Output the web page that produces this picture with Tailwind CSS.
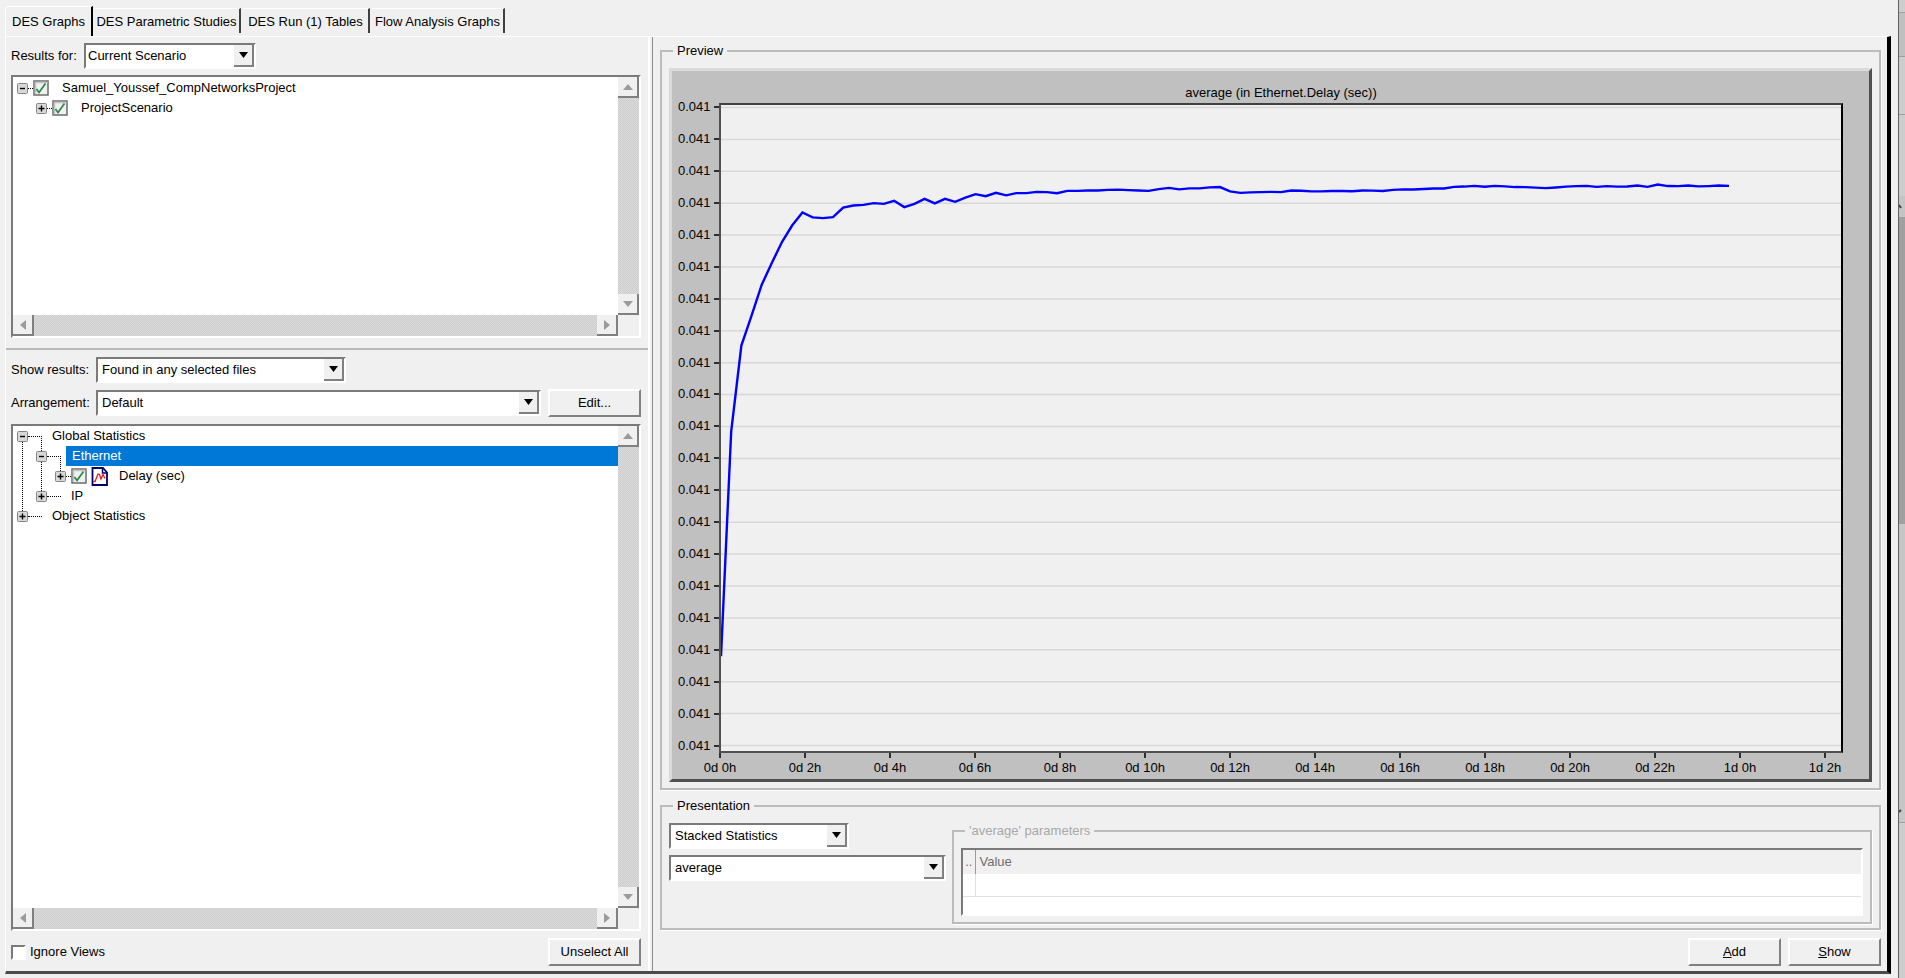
<!DOCTYPE html>
<html lang="en">
<head>
<meta charset="utf-8">
<title>Results Browser</title>
<script src="https://cdn.jsdelivr.net/npm/@tailwindcss/browser@4"></script>
</head>
<body class="flex h-screen overflow-hidden bg-[#f0f0f0] font-['Liberation_Sans',Arial,sans-serif] text-[13px] leading-5 text-black">
<svg class="absolute size-0">
  <defs>
    <symbol id="minus" viewBox="0 0 11 11"><rect x=".5" y=".5" width="10" height="10" rx="1" fill="#d8d8d8" stroke="#868686"/><path d="M3 5.5h5" stroke="#000" stroke-width="1.4"/></symbol>
    <symbol id="plus" viewBox="0 0 11 11"><rect x=".5" y=".5" width="10" height="10" rx="1" fill="#d8d8d8" stroke="#868686"/><path d="M2.5 5.5h6M5.5 2.5v6" stroke="#000" stroke-width="1.4"/></symbol>
    <symbol id="check" viewBox="0 0 16 16"><rect x="1" y="1" width="14" height="14" fill="#f0f0f0" stroke="#6c6c6c" stroke-width="1.5"/><path d="M2.500 14V2.500h12" fill="none" stroke="#c4c4c4" stroke-width="1.500"/><path d="M3.500 9l2.500 3.500L12.500 3.500" fill="none" stroke="#2d8a4a" stroke-width="1.800"/></symbol>
    <symbol id="doc" viewBox="0 0 18 19"><path d="M1.500 1h10.500l4 4.500V18H1.500z" fill="#fff" stroke="#00006e" stroke-width="1.800"/><path d="M11.500 1v5h5" fill="none" stroke="#00006e" stroke-width="1.500"/><path d="M2.500 14.500h1.500L7 7l1.500.5L10 12l2-4.500 2 4" fill="none" stroke="#f01818" stroke-width="1.300"/></symbol>
    <pattern id="dither" width="2" height="2" patternUnits="userSpaceOnUse"><rect width="2" height="2" fill="#dadada"/><path d="M0 0h1v1H0zM1 1h1v1H1z" fill="#cecece"/></pattern>
    <symbol id="up" viewBox="0 0 10 6"><path d="M0 6h10L5 0z" fill="#9b9b9b"/></symbol>
    <symbol id="down" viewBox="0 0 10 6"><path d="M0 0h10L5 6z" fill="#9b9b9b"/></symbol>
    <symbol id="left" viewBox="0 0 6 10"><path d="M6 0v10L0 5z" fill="#9b9b9b"/></symbol>
    <symbol id="right" viewBox="0 0 6 10"><path d="M0 0v10l6-5z" fill="#9b9b9b"/></symbol>
    <symbol id="drop" viewBox="0 0 9 6"><path d="M0 0h9L4.500 6z" fill="#000"/></symbol>
  </defs>
</svg>

<div class="flex min-w-0 flex-1 flex-col pt-1.5 pr-[7px] pb-1 pl-[5px]">
  <nav class="flex h-[30px] shrink-0 items-start" role="tablist">
    <button role="tab" aria-selected="true" class="h-[31px] w-[88px] rounded-tl-sm border-t border-r-2 border-l border-t-white border-r-black border-l-white text-center whitespace-nowrap">DES Graphs</button>
    <button role="tab" class="mt-0.5 ml-px h-[25px] w-[147px] border-t border-r-2 border-t-white border-r-[#404040] pt-px text-center whitespace-nowrap">DES Parametric Studies</button>
    <button role="tab" class="mt-0.5 ml-0.5 h-[25px] w-[127px] border-t border-r-2 border-t-white border-r-[#404040] pt-px text-center whitespace-nowrap">DES Run (1) Tables</button>
    <button role="tab" class="mt-0.5 ml-0.5 h-[25px] w-[133px] border-t border-r-2 border-t-white border-r-[#404040] pt-px text-center whitespace-nowrap">Flow Analysis Graphs</button>
  </nav>

  <div class="flex min-h-0 flex-1 border-t border-r-4 border-b-3 border-l border-t-white border-r-black border-b-[#4a4a4a] border-l-white">
    <!-- Left pane: file tree and statistic tree -->
    <section class="flex w-[644px] shrink-0 flex-col border-r-2 border-white">
      <div class="flex h-[313px] shrink-0 flex-col border-b-2 border-[#b9b9b9] pt-1.5 pr-[7px] pb-2.5 pl-[5px]">
        <div class="flex items-center">
          <label for="results" class="w-[73px]">Results for:</label>
          <div class="relative h-[26px] w-[172px] border-2 border-t-[#7a7a7a] border-r-white border-b-white border-l-[#7a7a7a] bg-white">
            <select id="results" class="h-full w-full appearance-none pl-0.5 outline-none"><option>Current Scenario</option></select>
            <span class="pointer-events-none absolute inset-y-0 right-0 flex w-5 items-center justify-center border-r-2 border-b-2 border-[#808080] bg-[#f0f0f0]"><svg class="h-1.5 w-[9px]"><use href="#drop"/></svg></span>
          </div>
        </div>
        <div class="mt-1.5 flex min-h-0 flex-1 flex-col border-2 border-t-[#7a7a7a] border-r-white border-b-white border-l-[#7a7a7a] bg-white">
          <div class="flex min-h-0 flex-1">
            <ul class="min-w-0 flex-1 pt-px pl-1" role="tree">
              <li class="flex h-5 items-center"><svg class="size-[11px]"><use href="#minus"/></svg><i class="w-[5px] border-t border-dotted border-black"></i><svg class="size-4"><use href="#check"/></svg><span class="ml-[13px]">Samuel_Youssef_CompNetworksProject</span></li>
              <li class="flex h-5 items-center pl-[19px]"><svg class="size-[11px]"><use href="#plus"/></svg><i class="w-[5px] border-t border-dotted border-black"></i><svg class="size-4"><use href="#check"/></svg><span class="ml-[13px]">ProjectScenario</span></li>
            </ul>
            <div class="flex w-[21px] flex-col">
              <button aria-label="Scroll up" class="flex h-[21px] items-center justify-center border-r-2 border-b-2 border-[#808080] bg-[#f0f0f0]"><svg class="h-1.5 w-2.5"><use href="#up"/></svg></button>
              <svg class="min-h-0 w-full flex-1"><rect width="100%" height="100%" fill="url(#dither)"/></svg>
              <button aria-label="Scroll down" class="flex h-[21px] items-center justify-center border-r-2 border-b-2 border-[#808080] bg-[#f0f0f0]"><svg class="h-1.5 w-2.5"><use href="#down"/></svg></button>
            </div>
          </div>
          <div class="flex h-[21px] bg-[#f0f0f0] pr-[21px]">
            <button aria-label="Scroll left" class="flex w-[21px] items-center justify-center border-r-2 border-b-2 border-[#808080] bg-[#f0f0f0]"><svg class="h-2.5 w-1.5"><use href="#left"/></svg></button>
            <svg class="h-full min-w-0 flex-1"><rect width="100%" height="100%" fill="url(#dither)"/></svg>
            <button aria-label="Scroll right" class="flex w-[21px] items-center justify-center border-r-2 border-b-2 border-[#808080] bg-[#f0f0f0]"><svg class="h-2.5 w-1.5"><use href="#right"/></svg></button>
          </div>
        </div>
      </div>

      <div class="flex min-h-0 flex-1 flex-col pt-[7px] pr-[7px] pb-[5px] pl-[5px]">
        <div class="flex items-center">
          <label for="show" class="w-[85px]">Show results:</label>
          <div class="relative h-[26px] w-[250px] border-2 border-t-[#7a7a7a] border-r-white border-b-white border-l-[#7a7a7a] bg-white">
            <select id="show" class="h-full w-full appearance-none pl-1 outline-none"><option>Found in any selected files</option></select>
            <span class="pointer-events-none absolute inset-y-0 right-0 flex w-5 items-center justify-center border-r-2 border-b-2 border-[#808080] bg-[#f0f0f0]"><svg class="h-1.5 w-[9px]"><use href="#drop"/></svg></span>
          </div>
        </div>
        <div class="mt-1.5 flex items-center">
          <label for="arr" class="w-[85px]">Arrangement:</label>
          <div class="relative h-[26px] w-[445px] border-2 border-t-[#7a7a7a] border-r-white border-b-white border-l-[#7a7a7a] bg-white">
            <select id="arr" class="h-full w-full appearance-none pl-1 outline-none"><option>Default</option></select>
            <span class="pointer-events-none absolute inset-y-0 right-0 flex w-5 items-center justify-center border-r-2 border-b-2 border-[#808080] bg-[#f0f0f0]"><svg class="h-1.5 w-[9px]"><use href="#drop"/></svg></span>
          </div>
          <button class="ml-auto h-7 w-[93px] border-2 border-t-white border-r-[#808080] border-b-[#808080] border-l-white">Edit...</button>
        </div>
        <div class="mt-[7px] flex min-h-0 flex-1 flex-col border-2 border-t-[#7a7a7a] border-r-white border-b-white border-l-[#7a7a7a] bg-white">
          <div class="flex min-h-0 flex-1">
            <ul class="relative min-w-0 flex-1 pl-1" role="tree">
              <li class="flex h-5 items-center"><svg class="size-[11px]"><use href="#minus"/></svg><i class="w-3.5 border-t border-dotted border-black"></i><span class="ml-2.5">Global Statistics</span></li>
              <li class="flex h-5 items-center pl-[19px]"><svg class="size-[11px]"><use href="#minus"/></svg><i class="w-3.5 border-t border-dotted border-black"></i><span class="ml-[5px] flex-1 bg-[#0078d7] pl-1.5 text-white">Ethernet</span></li>
              <li class="flex h-5 items-center pl-[38px]"><svg class="size-[11px]"><use href="#plus"/></svg><i class="w-[5px] border-t border-dotted border-black"></i><svg class="size-4"><use href="#check"/></svg><svg class="ml-1 h-[19px] w-[18px]"><use href="#doc"/></svg><span class="ml-2.5">Delay (sec)</span></li>
              <li class="flex h-5 items-center pl-[19px]"><svg class="size-[11px]"><use href="#plus"/></svg><i class="w-3.5 border-t border-dotted border-black"></i><span class="ml-2.5">IP</span></li>
              <li class="flex h-5 items-center"><svg class="size-[11px]"><use href="#plus"/></svg><i class="w-3.5 border-t border-dotted border-black"></i><span class="ml-2.5">Object Statistics</span></li>
              <svg class="pointer-events-none absolute top-0 left-0 h-[100px] w-[66px]" fill="none" stroke="#000" stroke-dasharray="1 1"><path d="M9.500 16v69M28.500 10v15M28.500 36v29M47.500 30v15"/></svg>
            </ul>
            <div class="flex w-[21px] flex-col">
              <button aria-label="Scroll up" class="flex h-[21px] items-center justify-center border-r-2 border-b-2 border-[#808080] bg-[#f0f0f0]"><svg class="h-1.5 w-2.5"><use href="#up"/></svg></button>
              <svg class="min-h-0 w-full flex-1"><rect width="100%" height="100%" fill="url(#dither)"/></svg>
              <button aria-label="Scroll down" class="flex h-[21px] items-center justify-center border-r-2 border-b-2 border-[#808080] bg-[#f0f0f0]"><svg class="h-1.5 w-2.5"><use href="#down"/></svg></button>
            </div>
          </div>
          <div class="flex h-[21px] bg-[#f0f0f0] pr-[21px]">
            <button aria-label="Scroll left" class="flex w-[21px] items-center justify-center border-r-2 border-b-2 border-[#808080] bg-[#f0f0f0]"><svg class="h-2.5 w-1.5"><use href="#left"/></svg></button>
            <svg class="h-full min-w-0 flex-1"><rect width="100%" height="100%" fill="url(#dither)"/></svg>
            <button aria-label="Scroll right" class="flex w-[21px] items-center justify-center border-r-2 border-b-2 border-[#808080] bg-[#f0f0f0]"><svg class="h-2.5 w-1.5"><use href="#right"/></svg></button>
          </div>
        </div>
        <div class="mt-[7px] flex items-center">
          <input id="ignore" type="checkbox" class="size-[15px] appearance-none border-2 border-t-[#7a7a7a] border-r-white border-b-white border-l-[#7a7a7a] bg-white">
          <label for="ignore" class="ml-1">Ignore Views</label>
          <button class="ml-auto h-7 w-[93px] border-2 border-t-white border-r-[#808080] border-b-[#808080] border-l-white">Unselect All</button>
        </div>
      </div>
    </section>

    <!-- Right pane: preview graph and presentation options -->
    <section class="ml-0.5 flex min-w-0 flex-1 flex-col border-l border-[#8c8c8c] pt-1 pr-1.5 pb-[5px] pl-[7px]">
      <fieldset class="flex min-h-0 flex-1 flex-col border-2 border-[#bcbcbc] px-[7px] pb-1.5 shadow-[1px_1px_0_#fff]">
        <legend class="ml-1 px-1">Preview</legend>
        <div class="mt-[7px] flex min-h-0 flex-1 flex-col border-3 border-t-[#dadada] border-r-[#505050] border-b-[#505050] border-l-[#dadada] bg-[#c0c0c0] pr-[26px]">
          <h2 class="h-8 pt-3 pl-[47px] text-center leading-5">average (in Ethernet.Delay (sec))</h2>
          <div class="flex min-h-0 flex-1">
            <div id="ylabels" class="flex w-[47px] flex-col justify-between pt-1 pb-[7px]"></div>
            <div class="min-w-0 flex-1 border-2 border-t-[#404040] border-r-black border-b-[#505050] border-l-[#505050] bg-[#f0f0f0]">
              <svg id="plot" class="block h-full w-full" viewBox="720 105 1122 647" preserveAspectRatio="none"></svg>
            </div>
          </div>
          <div id="xlabels" class="mr-[18px] ml-12 flex h-[26px] shrink-0 justify-between"></div>
        </div>
      </fieldset>

      <fieldset class="mt-1.5 flex h-[134px] shrink-0 border-2 border-[#bcbcbc] px-[7px] pb-1 shadow-[1px_1px_0_#fff]">
        <legend class="ml-1 px-1">Presentation</legend>
        <div class="mt-[7px] mr-1.5 flex w-[277px] shrink-0 flex-col gap-1.5">
          <div class="relative h-[26px] w-[180px] border-2 border-t-[#7a7a7a] border-r-white border-b-white border-l-[#7a7a7a] bg-white">
            <select aria-label="Stacking" class="h-full w-full appearance-none pl-1 outline-none"><option>Stacked Statistics</option></select>
            <span class="pointer-events-none absolute inset-y-0 right-0 flex w-5 items-center justify-center border-r-2 border-b-2 border-[#808080] bg-[#f0f0f0]"><svg class="h-1.5 w-[9px]"><use href="#drop"/></svg></span>
          </div>
          <div class="relative h-[26px] w-full border-2 border-t-[#7a7a7a] border-r-white border-b-white border-l-[#7a7a7a] bg-white">
            <select aria-label="Filter" class="h-full w-full appearance-none pl-1 outline-none"><option>average</option></select>
            <span class="pointer-events-none absolute inset-y-0 right-0 flex w-5 items-center justify-center border-r-2 border-b-2 border-[#808080] bg-[#f0f0f0]"><svg class="h-1.5 w-[9px]"><use href="#drop"/></svg></span>
          </div>
        </div>
        <fieldset disabled class="mt-[5px] h-[103px] min-w-0 flex-1 border-2 border-[#bcbcbc] px-[7px] text-[#a8a8a8] shadow-[1px_1px_0_#fff]">
          <legend class="ml-1 px-1">'average' parameters</legend>
          <div class="mt-[7px] h-[68px] border-2 border-t-[#7a7a7a] border-r-white border-b-white border-l-[#7a7a7a] bg-white">
            <table class="w-full table-fixed border-collapse text-left text-[#6d6d6d]">
              <thead class="bg-[#f0f0f0]"><tr class="h-6"><th class="w-3 border-r border-[#9a9a9a] p-0 text-center font-normal">..</th><th class="p-0 pl-1 font-normal">Value</th></tr></thead>
              <tbody><tr class="h-[22px] border-b border-[#e0e0e0]"><td class="border-r border-[#e0e0e0] p-0"></td><td class="p-0"></td></tr></tbody>
            </table>
          </div>
        </fieldset>
      </fieldset>

      <div class="mt-2 flex shrink-0 justify-end gap-[7px]">
        <button class="h-7 w-[93px] border-2 border-t-white border-r-[#808080] border-b-[#808080] border-l-white"><u>A</u>dd</button>
        <button class="h-7 w-[93px] border-2 border-t-white border-r-[#808080] border-b-[#808080] border-l-white"><u>S</u>how</button>
      </div>
    </section>
  </div>
</div>

<!-- Edge of the window behind -->
<aside class="flex w-[7px] shrink-0 flex-col border-l border-[#606060] bg-[#cdcdcd]">
  <div class="h-[13px] border-b border-[#a0a0a0]"></div>
  <div class="h-11 border-b border-[#a0a0a0] bg-[#c0c0c0]"></div>
  <div class="h-[58px] border-b border-[#a0a0a0]"></div>
  <div class="h-[81px]"></div>
  <svg class="h-[21px] w-1.5 bg-[#c4c4c4]"><path d="M0 9l2 3" stroke="#404040" stroke-width="2"/></svg>
  <div class="h-[307px] bg-[#a0a0a0]"></div>
  <div class="h-[276px] bg-[#c6c6c6]"></div>
  <svg class="h-[23px] w-1.5 border-b border-[#a0a0a0] bg-[#c6c6c6]"><path d="M0 12l2-2" stroke="#404040" stroke-width="2"/></svg>
</aside>

<script>
const delays = [657,432,346,316,285,263,242,225.5,212.7,217.5,218.3,217.3,207.7,205.7,205,203.3,204,201,207.3,204,199,203.5,199,202,197.7,194.3,196.3,193,195.5,193.3,193.3,192,192.3,193.3,191,191,190.7,190.7,190,189.8,190.3,190.7,191,189.2,188,189.5,188.5,188.5,187.5,187.2,191.5,193,192.5,192.3,192,192.3,190.7,190.9,191.5,191.5,191.2,191.2,191.4,190.7,190.8,191.2,190,189.5,189.7,189.2,188.7,188.6,187,186.7,186,186.8,186,186.5,187.2,187.3,187.8,188.3,187.6,186.8,186.3,186,187,186.3,186.8,186.6,185.7,187,184.7,186.2,186.3,185.7,186.5,186.2,185.7,186];
let lines = '';
for (let i = 0; i <= 20; i++) {
  const y = 107.5 + i * 31.95;
  lines += `<path d="M720 ${y}H1843" stroke="#d8d8d8" stroke-width="1.5"/>`;
}
const points = delays.map((y, i) => (720 + i * 10.2).toFixed(1) + ',' + y).join(' ');
document.getElementById('plot').innerHTML = lines + `<polyline points="${points}" fill="none" stroke="#0000ff" stroke-width="2.4" vector-effect="non-scaling-stroke"/>`;
document.getElementById('ylabels').innerHTML = '<div class="flex h-0 items-center justify-between pl-1.5"><span>0.041</span><i class="w-[5px] border-t-2 border-[#303030]"></i></div>'.repeat(21);
document.getElementById('xlabels').innerHTML = [0,2,4,6,8,10,12,14,16,18,20,22,24,26].map(h => `<div class="flex w-0 flex-col items-center"><i class="h-[5px] border-l-2 border-[#303030]"></i><span class="whitespace-nowrap">${Math.floor(h / 24)}d ${h % 24}h</span></div>`).join('');
</script>
</body>
</html>
